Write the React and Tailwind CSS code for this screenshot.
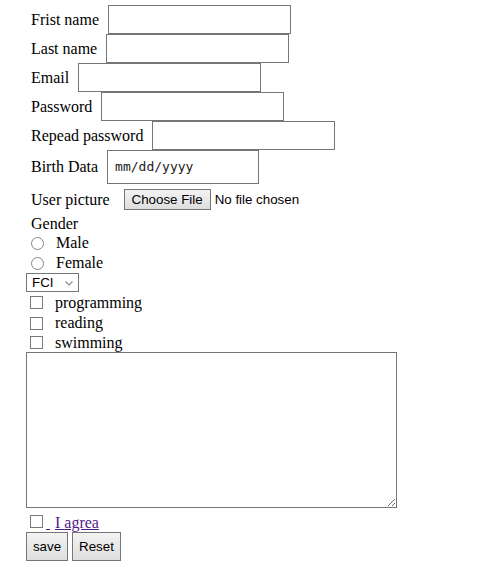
import React from "react";

const sans = "font-['Liberation_Sans',Arial,sans-serif]";

function TextRow({ label, type = "text" }) {
  return (
    <div className="flex items-center h-[29px]">
      <label className="mx-[5px] whitespace-nowrap">{label}</label>
      <input
        type={type}
        className={`ml-[4px] w-[183px] h-[29px] border border-[#767676] bg-white px-[2px] text-[13.33px] ${sans} outline-none`}
      />
    </div>
  );
}

function Btn({ children, className = "" }) {
  return (
    <button
      type="button"
      className={`flex items-center justify-center border border-[#767676] bg-linear-to-b from-[#f3f3f3] to-[#dedede] text-[13.33px] text-black ${sans} ${className}`}
    >
      {children}
    </button>
  );
}

function Check({ className = "" }) {
  return (
    <input
      type="checkbox"
      className={`appearance-none ml-[4px] mr-[3px] h-[13px] w-[13px] shrink-0 border border-[#7a7a7a] bg-white ${className}`}
    />
  );
}

function Radio() {
  return (
    <input
      type="radio"
      name="gender"
      className="appearance-none ml-[5px] mr-[3px] h-[13px] w-[13px] shrink-0 rounded-full border border-[#858585] bg-white"
    />
  );
}

export default function App() {
  return (
    <div className="min-h-[582px] w-full bg-white pl-[26px] pt-[5px] text-[16px] leading-normal text-black font-['Liberation_Serif','Times_New_Roman',serif]">
      <form onSubmit={(e) => e.preventDefault()}>
        <TextRow label="Frist name" />
        <TextRow label="Last name" />
        <TextRow label="Email" type="email" />
        <TextRow label="Password" type="password" />
        <TextRow label="Repead password" type="password" />

        <div className="flex items-center h-[34px]">
          <label className="mx-[5px] whitespace-nowrap">Birth Data</label>
          <div className="ml-[4px] flex h-[34px] w-[152px] items-center border border-[#767676] bg-white pl-[7px] text-[13px] text-[#1a1a1a] font-['DejaVu_Sans_Mono',monospace]">
            mm/dd/yyyy
          </div>
        </div>

        <div className="mt-[5px] flex items-center h-[21px]">
          <label className="mx-[5px] whitespace-nowrap">User picture</label>
          <Btn className="ml-[9px] h-[21px] w-[87px]">Choose File</Btn>
          <span className={`ml-[4px] text-[13.33px] ${sans}`}>No file chosen</span>
        </div>

        <div className="mt-[4px] flex items-center h-[19px]">
          <span className="ml-[5px]">Gender</span>
        </div>
        <div className="flex items-center h-[20px]">
          <Radio />
          <label className="ml-[9px]">Male</label>
        </div>
        <div className="flex items-center h-[20px]">
          <Radio />
          <label className="ml-[9px]">Female</label>
        </div>

        <div className="flex h-[19px]">
          <div className="relative h-[19px] w-[53px]">
            <select
              className={`appearance-none block h-[19px] w-[53px] border border-[#767676] bg-white py-0 pl-[5px] text-[13.33px] leading-[15px] text-black ${sans}`}
              defaultValue="FCI"
            >
              <option>FCI</option>
              <option>FCAI</option>
            </select>
            <svg
              className="pointer-events-none absolute left-[39px] top-[8px]"
              width="8"
              height="5"
              viewBox="0 0 8 5"
            >
              <path d="M0.5 0.5 L4 4 L7.5 0.5" fill="none" stroke="#8a8a8a" strokeWidth="1.1" />
            </svg>
          </div>
        </div>

        <div className="flex items-center h-[21px]">
          <Check />
          <label className="ml-[9px]">programming</label>
        </div>
        <div className="flex items-center h-[20px]">
          <Check />
          <label className="ml-[9px]">reading</label>
        </div>
        <div className="flex items-center h-[19px]">
          <Check />
          <label className="ml-[9px]">swimming</label>
        </div>

        <textarea className="block h-[156px] w-[371px] border border-[#767676] bg-white" />

        <div className="flex items-end h-[24px]">
          <Check className="mb-[4px]" />
          <a href="#agree" className="-mb-[3px] whitespace-pre text-[#551a8b] underline">
            <span>{" "}</span>
            <span className="ml-[5px]">I agrea</span>
          </a>
        </div>

        <div className="flex gap-[4px] h-[29px]">
          <Btn className="h-[29px] w-[42px]">save</Btn>
          <Btn className="h-[29px] w-[49px]">Reset</Btn>
        </div>
      </form>
    </div>
  );
}
